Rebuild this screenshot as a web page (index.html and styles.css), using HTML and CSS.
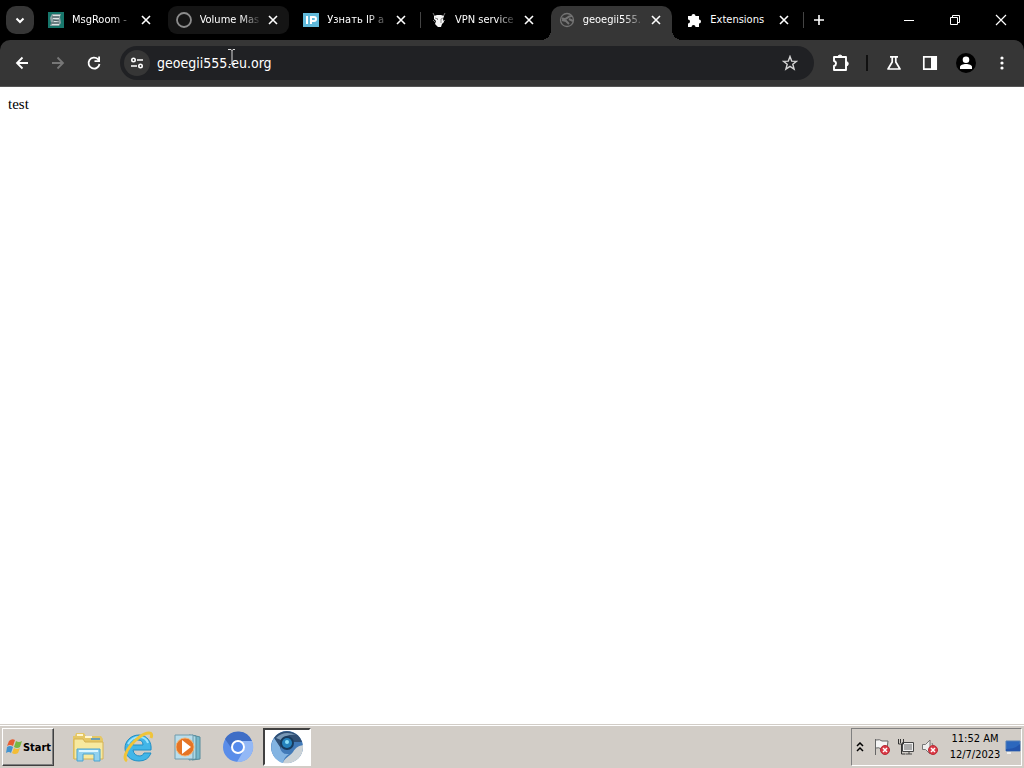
FILE: index.html
```html
<!DOCTYPE html>
<html lang="en">
<head>
<meta charset="utf-8">
<title>geoegii555.eu.org</title>
<link rel="stylesheet" href="styles.css">
</head>
<body>
<div class="desktop">
<header class="browser">
  <div class="tabstrip">
    <button class="search-tabs" aria-label="Search tabs"><svg width="12" height="12" viewBox="0 0 12 12"><path d="M2.5 4.5 6 8l3.500-3.500" fill="none" stroke="#fff" stroke-width="2"/></svg></button>
    <nav class="tabs" aria-label="Tabs">
      <div class="tab">
        <svg class="fav" viewBox="0 0 16 16"><path fill="#17766b" d="M0 0h16v16H0z"/><path fill="#8fa3a5" d="M4 2h9l-1 3 1 6-2 3H2l1-3-1-5z"/><path d="M5 3.500h7M5 6.500h6M4 12.500h7M6 9.500h5" stroke="#dce3e3"/><path d="M4 5h7M5 8l6 1M3 11h8" stroke="#46585e"/></svg>
        <a class="title" href="#">MsgRoom -</a><button class="close" aria-label="Close"><svg viewBox="0 0 10 10"><path d="m1 1 8 8m0-8-8 8"/></svg></button>
      </div>
      <div class="tab hover">
        <svg class="fav" viewBox="0 0 16 16"><circle cx="8" cy="8" r="7" fill="none" stroke="#8c8c8c" stroke-width="1.800"/></svg>
        <a class="title" href="#">Volume Mas</a><button class="close" aria-label="Close"><svg viewBox="0 0 10 10"><path d="m1 1 8 8m0-8-8 8"/></svg></button>
      </div>
      <div class="tab line">
        <svg class="fav" viewBox="0 0 16 16"><path fill="#60b9da" d="M0 1h16v14H0z"/><path d="M4 4v8M8 12V5h3q2 0 2 2t-2 2H8" fill="none" stroke="#fff" stroke-width="2"/></svg>
        <a class="title" href="#">Узнать IP а</a><button class="close" aria-label="Close"><svg viewBox="0 0 10 10"><path d="m1 1 8 8m0-8-8 8"/></svg></button>
      </div>
      <div class="tab">
        <svg class="fav" viewBox="0 0 16 16"><path d="m2 1 2 4m10-4-2 4M2 8l2 2m10-2-2 2" stroke="#777"/><path fill="#f4f4f4" d="m3 4 3-1h4l3 1-1 3 1 3-2 2-1 3H7l-3-3 1-3-2-2z"/><path d="m4 6 3 1-1 1m6-2-2 1v4" fill="none" stroke="#888"/></svg>
        <a class="title" href="#">VPN service</a><button class="close" aria-label="Close"><svg viewBox="0 0 10 10"><path d="m1 1 8 8m0-8-8 8"/></svg></button>
      </div>
      <div class="tab active">
        <svg class="fav" viewBox="0 0 16 16"><circle cx="8" cy="8" r="6.500" fill="none" stroke="#747474" stroke-width="1.300"/><path d="M3 6q3 2 5 0t5-2M3 8l4 1 3 3m0-5 4 2" fill="none" stroke="#747474" stroke-width="2"/></svg>
        <a class="title" href="#">geoegii555.</a><button class="close" aria-label="Close"><svg viewBox="0 0 10 10"><path d="m1 1 8 8m0-8-8 8"/></svg></button>
      </div>
      <div class="tab line">
        <svg class="fav" viewBox="0 0 16 16"><path fill="#fff" d="M2 4h3.500a2 2 0 1 1 4 0H13v3.500a2 2 0 1 1 0 4V15H9.500a2 2 0 0 0-4 0H2v-3.500a2 2 0 0 0 0-4z"/></svg>
        <a class="title whole" href="#">Extensions</a><button class="close" aria-label="Close"><svg viewBox="0 0 10 10"><path d="m1 1 8 8m0-8-8 8"/></svg></button>
      </div>
    </nav>
    <button class="new-tab" aria-label="New tab"><svg width="12" height="12"><path d="M6 1v10M1 6h10" stroke="#fff" stroke-width="1.600"/></svg></button>
    <div class="window-controls">
      <button aria-label="Minimize"><svg width="12" height="12"><path d="M1 6.500h10" stroke="#fff"/></svg></button>
      <button aria-label="Restore"><svg width="12" height="12" fill="none" stroke="#fff"><path d="M1.500 3.500h7v7h-7zM3.500 3.500v-2h7v7h-2"/></svg></button>
      <button aria-label="Close window"><svg width="12" height="12"><path d="m1 1 10 10m0-10L1 11" stroke="#fff" stroke-width="1.200"/></svg></button>
    </div>
  </div>
  <div class="toolbar">
    <div class="nav">
      <button aria-label="Back"><svg width="16" height="16" viewBox="0 0 16 16"><path d="M14 8H3m5.500-5.500L3 8l5.500 5.500" fill="none" stroke="#fff" stroke-width="1.800"/></svg></button>
      <button aria-label="Forward" disabled><svg width="16" height="16" viewBox="0 0 16 16"><path d="M2 8h11M7.500 2.500 13 8l-5.500 5.500" fill="none" stroke="#777" stroke-width="1.800"/></svg></button>
      <button aria-label="Reload"><svg width="16" height="16" viewBox="0 0 16 16"><path d="M13.500 9A5.500 5.500 0 1 1 12 4.200L13 5.500" fill="none" stroke="#fff" stroke-width="1.800"/><path d="M14 1.500V7H8.500V5.300h3.700V1.500z" fill="#fff"/></svg></button>
    </div>
    <div class="omnibox">
      <button class="site-info" aria-label="Site information"><svg width="14" height="14" viewBox="0 0 14 14" fill="none" stroke="#fff" stroke-width="1.600"><circle cx="3.500" cy="4" r="1.700"/><path d="M7 4h6M1 10h6"/><circle cx="10.500" cy="10" r="1.700"/></svg></button>
      <input class="address" aria-label="Address" value="geoegii555.eu.org">
      <button class="star" aria-label="Bookmark"><svg width="16" height="16" viewBox="0 0 16 16"><path d="m8 1.500 1.700 4.600 4.900.2-3.800 3 1.300 4.800L8 11.400l-4.100 2.700 1.300-4.800-3.800-3 4.900-.2z" fill="none" stroke="#d5d5d5" stroke-width="1.400"/></svg></button>
    </div>
    <div class="tools">
      <button aria-label="Extensions"><svg width="18" height="18" viewBox="0 0 18 18"><path d="M2 3h12v13H2v-4q2-.5 2-2.500T2 7z" fill="none" stroke="#fff" stroke-width="1.900" stroke-linejoin="round"/><path d="M6 3a2 2 0 0 1 4 0zM14 7.500a2 2 0 0 1 0 4.500z" fill="#fff" stroke="#fff"/></svg></button>
      <span class="divider"></span>
      <button aria-label="Labs"><svg width="16" height="16" viewBox="0 0 16 16"><path d="M4 1.800h8M6.200 2v5L2 14h12L9.800 7V2" fill="none" stroke="#fff" stroke-width="1.700" stroke-linejoin="round"/></svg></button>
      <button aria-label="Side panel"><svg width="16" height="16" viewBox="0 0 16 16"><path d="M1.800 1.800h12.400v12.400H1.800z" fill="none" stroke="#fff" stroke-width="1.700"/><path d="M9 1h6v14H9z" fill="#fff"/></svg></button>
      <button aria-label="Profile"><svg width="20" height="20" viewBox="0 0 20 20"><circle cx="10" cy="10" r="10"/><circle cx="10" cy="6.700" r="3.300" fill="#fff"/><path d="M4 16v-2c0-4 12-4 12 0v2z" fill="#fff"/></svg></button>
      <button aria-label="Menu"><svg width="16" height="16" viewBox="0 0 16 16" fill="#fff"><circle cx="8" cy="3" r="1.600"/><circle cx="8" cy="8" r="1.600"/><circle cx="8" cy="13" r="1.600"/></svg></button>
    </div>
  </div>
  <svg class="cursor" width="8" height="16" viewBox="0 0 8 16"><path d="M0 .5h3l1 1 1-1h2M4 1v14M1 15.500h2l1-1 1 1h2" fill="none" stroke="#d8d8d8"/></svg>
</header>
<main class="page">test</main>
<footer class="taskbar">
  <button class="start"><svg width="18" height="18" viewBox="0 0 18 18"><path d="M4 3q3-3 6-1L8 8Q5 6 2 8z" fill="#e65d32"/><path d="M11 3q3 2 6 0l-2 6q-3 2-6 0z" fill="#77b843"/><path d="M2 9q3-2 6 0l-2 6q-2-2-5 0z" fill="#4293cf"/><path d="M9 10q3 2 6 0l-2 5q-3 2-6 0z" fill="#f4bd35"/></svg>Start</button>
  <div class="apps">
    <button aria-label="File Explorer"><svg width="34" height="32" viewBox="0 0 34 32"><path d="M2 5h2l1-3h8l2 3h15l2 3v20H2z" fill="#e5c765"/><path d="M6 3h6v2H6zm8 2h7v2h-7z" fill="#fff6cf"/><path d="M3 8h9l2 3h18v17H3z" fill="#f7e99f" stroke="#d5b253"/><path d="M20 7h9v2h-9z" fill="#6d9fb3"/><path d="M6 18h23v12h-6v-7H12v7H6z" fill="#91d1ee" stroke="#4ba3cf"/><path d="M8 20h19" stroke="#def7ff" stroke-width="2"/></svg></button>
    <button aria-label="Internet Explorer"><svg width="32" height="32" viewBox="0 0 32 32"><path d="M29 19H11q1 6 7 6 3 0 4-3h7q-3 8-12 8C8 30 3 24 3 17S9 4 17 4s13 7 12 15zM11 14h10q0-5-5-5t-5 5z" fill="#42b6e8" stroke="#218fc5"/><path d="M6 13q4-7 11-7 7 0 9 6" fill="none" stroke="#9be5ff" stroke-width="2"/><path d="M5 30C-3 25 16 2 27 2q4 0 2 5" fill="none" stroke="#f0c439" stroke-width="3"/></svg></button>
    <button aria-label="Media Player"><svg width="32" height="32" viewBox="0 0 32 32"><path d="m20 4 8 2v22l-8 1z" fill="#74b7c9" stroke="#568b9c"/><path d="m17 4 7 1v23l-7 1z" fill="#abd9e6" stroke="#568b9c"/><path d="M3 4h18v24H3z" fill="#b9ddeb" stroke="#719bac"/><circle cx="13" cy="16" r="9" fill="#e57425" stroke="#f7b270"/><path d="m10 9 9 7-9 7z" fill="#fff"/></svg></button>
    <button aria-label="Chromium"><svg width="32" height="32" viewBox="0 0 32 32"><circle cx="16" cy="16" r="15" fill="#5a8de9"/><path d="M3 8A15 15 0 0 1 30 10H16a6 6 0 0 0-6 8z" fill="#3f6ec6"/><path d="M30 10A15 15 0 0 1 15 31l7-12q2-5-2-9z" fill="#93b8f6"/><circle cx="16" cy="16" r="7" fill="#fff"/><circle cx="16" cy="16" r="5" fill="#568bec"/></svg></button>
    <button class="current" aria-label="Browser"><svg width="34" height="34" viewBox="0 0 34 34"><circle cx="17" cy="17" r="16" fill="#427ab8"/><path d="M4 8A16 16 0 0 1 32 12H17q-7 0-6 8z" fill="#304f74"/><path d="M6 8q8-8 20-3-10-1-15 5z" fill="#7898b6"/><path d="M4 8q-6 10 1 20 5 5 8 5 1-6 6-9-8 1-9-7z" fill="#83b4e2"/><path d="M33 15c1 11-8 20-20 18 1-5 7-7 10-11 3-5 6-6 10-7z" fill="#cbd2d6"/><circle cx="17" cy="13" r="7" fill="#183b5e"/><circle cx="17" cy="13" r="5" fill="#2582bd"/><circle cx="17" cy="12" r="2" fill="#8cdef7"/></svg></button>
  </div>
  <div class="tray">
    <button class="more" aria-label="Show hidden icons"><svg width="8" height="10" viewBox="0 0 8 10"><path d="m1 4 3-3 3 3M1 9l3-3 3 3" fill="none" stroke="#000" stroke-width="1.500"/></svg></button>
    <button aria-label="Action Center"><svg width="18" height="18" viewBox="0 0 18 18"><path d="M2.500 17V1M3 2q4-1 6 1h6l-1 8H8q-2-2-5-1" fill="#f5f5f5" stroke="#666"/><circle cx="12" cy="12" r="4.500" fill="#dc3946" stroke="#b52d36"/><path d="m10 10 4 4m0-4-4 4" stroke="#fff" stroke-width="1.500"/></svg></button>
    <button aria-label="Network"><svg width="18" height="18" viewBox="0 0 18 18"><path d="M5.500 4.500h11v9h-11zM9 16h6M12 13v3" fill="#eee" stroke="#444"/><path d="M7 6h8v6H7z" fill="#aaa"/><path d="M1.500 1v5h5V1M3.500 1v4M4.500 6v10h4" fill="none" stroke="#333"/></svg></button>
    <button aria-label="Volume muted"><svg width="18" height="18" viewBox="0 0 18 18"><path d="M1.500 6.500h3L9 2v14l-4.500-4.500h-3zM11 5q3 3 0 8" fill="#eee" stroke="#777"/><circle cx="12" cy="12" r="4.500" fill="#dc3946" stroke="#b52d36"/><path d="m10 10 4 4m0-4-4 4" stroke="#fff" stroke-width="1.500"/></svg></button>
    <div class="clock"><time>11:52 AM</time><time>12/7/2023</time></div>
    <button class="peek" aria-label="Show desktop"><svg width="16" height="16" viewBox="0 0 16 16"><path d="M1 2h14v10H1z" fill="#2c67bd" stroke="#527fb7"/><path d="M1 10q9 0 14-5v7H1z" fill="#2354ac"/><path d="M2 14h4" stroke="#eee" stroke-width="2"/></svg></button>
  </div>
</footer>
</div>
</body>
</html>
```
FILE: styles.css
```css
* { box-sizing: border-box; }
body { margin: 0; font-family: "DejaVu Sans Condensed", "DejaVu Sans", sans-serif; }
button { display: flex; align-items: center; justify-content: center; padding: 0; border: 0; background: none; color: inherit; font: inherit; }
svg { display: block; flex: none; }
.desktop { min-height: 100vh; display: flex; flex-direction: column; background: #fff; }
.browser { position: relative; background: #000; color: #fff; }
.tabstrip { display: flex; height: 40px; }
.search-tabs { width: 28px; height: 28px; margin: 6px 6px 0; border-radius: 10px; background: #363636; }
.tabs { flex: 1; max-width: 766px; min-width: 0; display: grid; grid-template-columns: repeat(6, minmax(0, 1fr)); }
.tab { position: relative; display: flex; align-items: center; height: 28px; margin: 6px 6px 0 0; padding: 0 11px 0 8px; border-radius: 9px; }
.fav { width: 16px; height: 16px; margin-right: 8px; }
.title { flex: 1; min-width: 0; overflow: hidden; white-space: nowrap; color: #fff; font-size: 11px; line-height: 16px; text-decoration: none; mask-image: linear-gradient(to right, #000 65%, transparent); }
.title.whole { mask-image: none; }
.close { width: 10px; height: 10px; margin-left: 6px; }
.close svg { width: 10px; height: 10px; stroke: #fff; stroke-width: 1.6; }
.hover { background: #151515; }
.active { height: 34px; padding-bottom: 6px; background: #363636; border-radius: 10px 10px 0 0; }
.active::before, .active::after { content: ""; position: absolute; bottom: 0; width: 10px; height: 10px; }
.active::before { right: 100%; background: radial-gradient(circle at 0 0, transparent 10px, #363636 10px); }
.active::after { left: 100%; background: radial-gradient(circle at 100% 0, transparent 10px, #363636 10px); }
.line::after { content: ""; position: absolute; right: -4px; top: 6px; width: 1px; height: 16px; background: #444; }
.new-tab { width: 26px; }
.window-controls { display: flex; margin-left: auto; }
.window-controls button { width: 46px; }
.toolbar { display: flex; align-items: center; height: 47px; background: #363636; border-radius: 10px 10px 0 0; border-bottom: 1px solid #555; }
.nav { display: flex; padding: 0 8px 0 4px; }
.nav button { width: 36px; height: 36px; }
.omnibox { flex: 1; min-width: 0; display: flex; align-items: center; height: 34px; padding: 0 16px 0 4px; border-radius: 17px; background: #202124; }
.site-info { flex: none; width: 26px; height: 26px; border-radius: 50%; background: #363636; }
.address { flex: 1; min-width: 0; height: 26px; margin-left: 7px; padding: 0; border: 0; outline: 0; background: none; color: #fff; font: inherit; font-size: 14px; }
.tools { display: flex; align-items: center; padding-left: 9px; padding-right: 4px; }
.tools button { width: 36px; height: 36px; }
.divider { width: 2px; height: 16px; margin: 0 8px 0 7px; background: #101010; }
.cursor { position: absolute; left: 228px; top: 49px; }
.page { flex: 1; padding: 8px; color: #000; font-family: "Liberation Serif", serif; font-size: 15px; line-height: 18px; }
.taskbar { display: flex; height: 44px; padding: 4px 0 2px 2px; background: #d2cdc7; box-shadow: inset 0 1px #d2cdc7, inset 0 2px #fff; }
.start { width: 52px; border: 1px solid; border-color: #fff #404040 #404040 #fff; box-shadow: inset -1px -1px #808080; color: #000; font-size: 11px; font-weight: bold; }
.apps { display: flex; margin-left: 9px; }
.apps button { width: 50px; }
.apps .current { width: 48px; border: 2px solid; border-color: #404040 #fff #fff #404040; background: #fff; }
.tray { display: flex; align-items: center; margin-left: auto; margin-right: 2px; padding-left: 4px; border: 1px solid; border-color: #808080 #fff #fff #808080; }
.tray button { width: 24px; }
.tray .more { width: 8px; margin-right: 6px; }
.tray .peek { width: 17px; }
.clock { width: 58px; margin-left: 4px; text-align: center; font-size: 11px; line-height: 16px; }
.clock time { display: block; }
```
